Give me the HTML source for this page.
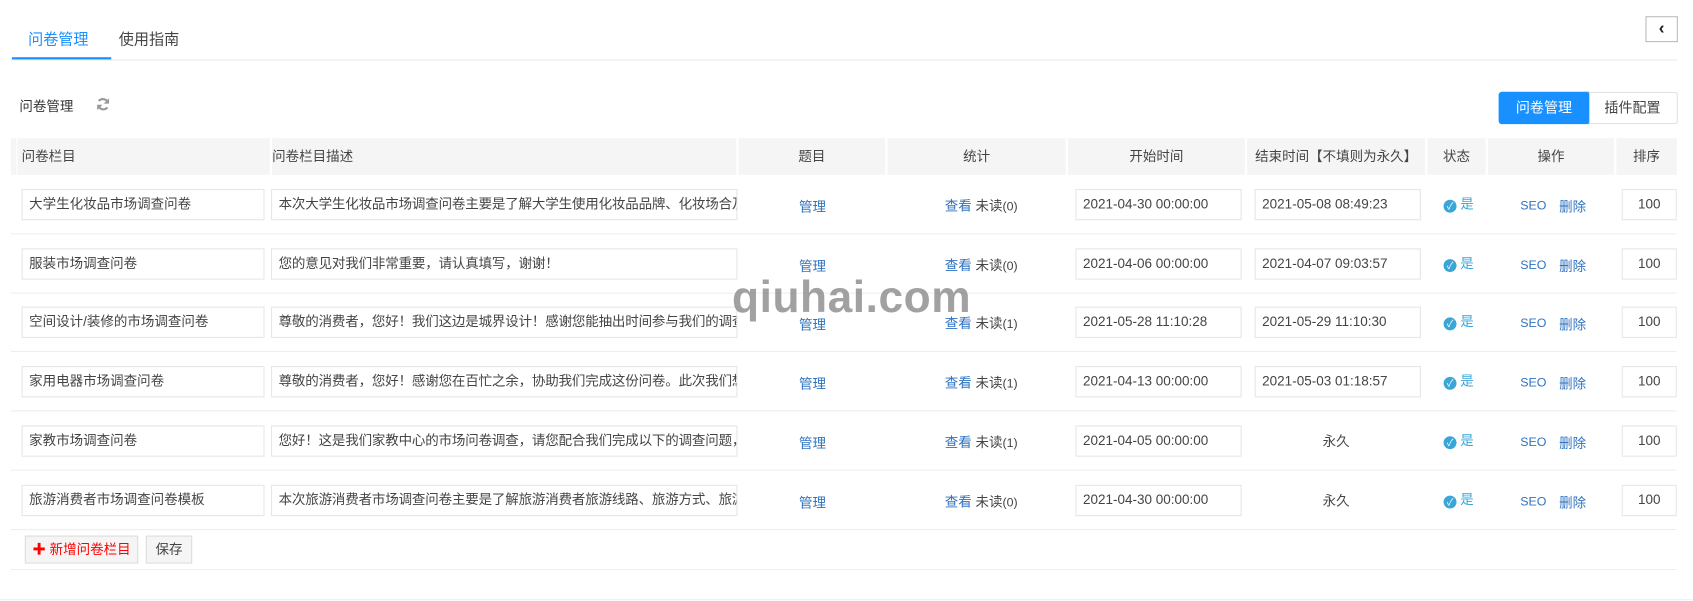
<!DOCTYPE html>
<html><head><meta charset="utf-8"><style>
*{box-sizing:border-box;margin:0;padding:0}
body{width:1693px;height:601px;background:#fff;font-family:"Liberation Sans","Noto Sans CJK SC",sans-serif;font-size:13px;color:#333;position:relative;overflow:hidden}
#w{position:absolute;left:0;top:0;width:1568px;height:557px;transform:scale(1.0797);transform-origin:0 0}
.a{position:absolute}
.inp{position:absolute;height:29px;border:1px solid #e6e6e6;background:#fff;line-height:27px;padding-left:6px;white-space:nowrap;overflow:hidden;color:#444;font-size:12.5px}
.hd{position:absolute;top:128px;height:34px;background:#f5f5f5;line-height:34px;text-align:center;color:#444;font-size:12.5px}
.lk{color:#2f73c0}
.sep{position:absolute;left:10px;width:1543px;height:1px;background:#eee}
</style></head><body><div id="w">
<div class="a" style="left:26px;top:26px;font-size:14px;color:#1890ff">问卷管理</div>
<div class="a" style="left:110px;top:26px;font-size:14px;color:#444">使用指南</div>
<div class="a" style="left:10px;top:55px;width:1543px;height:1px;background:#e8e8e8"></div>
<div class="a" style="left:11px;top:53px;width:92px;height:2px;background:#1890ff"></div>
<div class="a" style="left:1524px;top:15px;width:30px;height:24px;border:1px solid #bbb;text-align:center;line-height:21px;font-weight:bold;font-size:16px;color:#222">‹</div>
<div class="a" style="left:18px;top:88px;font-size:12.5px">问卷管理</div>
<svg class="a" style="left:89px;top:90px" width="13" height="13" viewBox="0 0 13 13"><path d="M11 5A5 5 0 0 0 2.5 3.5M2 8A5 5 0 0 0 10.5 9.5" stroke="#999" stroke-width="2" fill="none"/><path d="M12 1v5H7zM1 12V7h5z" fill="#999"/></svg>
<div class="a" style="left:1388px;top:85px;width:84px;height:30px;background:#1890ff;color:#fff;line-height:30px;text-align:center;border-radius:3px 0 0 3px">问卷管理</div>
<div class="a" style="left:1471px;top:85px;width:83px;height:30px;border:1px solid #ddd;border-left:none;color:#444;line-height:28px;text-align:center;border-radius:0 3px 3px 0">插件配置</div>
<div class="hd" style="left:10px;width:5px"></div>
<div class="hd" style="left:16px;width:234px;text-align:left;padding-left:4px">问卷栏目</div>
<div class="hd" style="left:252px;width:430px;text-align:left">问卷栏目描述</div>
<div class="hd" style="left:684px;width:136px">题目</div>
<div class="hd" style="left:822px;width:165px">统计</div>
<div class="hd" style="left:989px;width:164px">开始时间</div>
<div class="hd" style="left:1155px;width:165px">结束时间【不填则为永久】</div>
<div class="hd" style="left:1322px;width:54px">状态</div>
<div class="hd" style="left:1378px;width:117px">操作</div>
<div class="hd" style="left:1497px;width:56px">排序</div>
<div id="rows"></div>
<div class="a" style="left:23px;top:496px;width:105px;height:26px;border:1px solid #ddd;background:#f5f5f5;color:#f00;line-height:24px;text-align:center;font-size:12.5px"><b>✚</b> 新增问卷栏目</div>
<div class="a" style="left:135px;top:496px;width:43px;height:26px;border:1px solid #ddd;background:#f5f5f5;color:#444;line-height:24px;text-align:center;font-size:12.5px">保存</div>
<div class="sep" style="top:527px"></div>
<div class="a" style="left:0;top:555px;width:1568px;height:1px;background:#eee"></div>
<div class="a" style="left:678px;top:252px;font-family:'Liberation Sans',sans-serif;font-weight:bold;font-size:41px;color:rgba(130,130,130,0.75);letter-spacing:0.5px">qiuhai.com</div>
</div>
<script>
var d=[["大学生化妆品市场调查问卷","本次大学生化妆品市场调查问卷主要是了解大学生使用化妆品品牌、化妆场合及","0","2021-04-30 00:00:00","2021-05-08 08:49:23"],
["服装市场调查问卷","您的意见对我们非常重要，请认真填写，谢谢！","0","2021-04-06 00:00:00","2021-04-07 09:03:57"],
["空间设计/装修的市场调查问卷","尊敬的消费者，您好！我们这边是城界设计！感谢您能抽出时间参与我们的调查","1","2021-05-28 11:10:28","2021-05-29 11:10:30"],
["家用电器市场调查问卷","尊敬的消费者，您好！感谢您在百忙之余，协助我们完成这份问卷。此次我们想","1","2021-04-13 00:00:00","2021-05-03 01:18:57"],
["家教市场调查问卷","您好！这是我们家教中心的市场问卷调查，请您配合我们完成以下的调查问题，","1","2021-04-05 00:00:00",""],
["旅游消费者市场调查问卷模板","本次旅游消费者市场调查问卷主要是了解旅游消费者旅游线路、旅游方式、旅游","0","2021-04-30 00:00:00",""]];
var h="";
d.forEach(function(r,i){var t=175+i*54.7;var c=t+5;
h+='<div class="inp" style="left:20px;top:'+t+'px;width:225px">'+r[0]+'</div>';
h+='<div class="inp" style="left:251px;top:'+t+'px;width:432px;letter-spacing:-0.15px">'+r[1]+'</div>';
h+='<div class="a lk" style="left:740px;top:'+(c+1)+'px;font-size:12.5px">管理</div>';
h+='<div class="a" style="left:875px;top:'+c+'px;font-size:12.5px;color:#444"><span class="lk">查看</span> 未读<span style="font-size:11.5px">('+r[2]+')</span></div>';
h+='<div class="inp" style="left:996px;top:'+t+'px;width:154px">'+r[3]+'</div>';
if(r[4])h+='<div class="inp" style="left:1162px;top:'+t+'px;width:154px">'+r[4]+'</div>';else h+='<div class="a" style="left:1155px;width:165px;text-align:center;top:'+(c-1)+'px;font-size:12.5px;color:#444">永久</div>';
h+='<div class="a" style="left:1337px;top:'+(c-2)+'px;color:#3aa6d8;font-size:12.5px"><span style="display:inline-block;width:12px;height:12px;border-radius:50%;background:#3aa6d8;color:#fff;font-size:9px;line-height:12px;text-align:center;vertical-align:-1px">✓</span> 是</div>';
h+='<div class="a lk" style="left:1408px;top:'+(c+5)+'px;font-size:11.5px">SEO</div><div class="a lk" style="left:1444px;top:'+(c+1)+'px;font-size:12.5px">删除</div>';
h+='<div class="inp" style="left:1502px;top:'+t+'px;width:51px;text-align:center;padding:0">100</div>';
h+='<div class="sep" style="top:'+(t+41)+'px"></div>';
});
document.getElementById('rows').innerHTML=h;
</script>
</body></html>
